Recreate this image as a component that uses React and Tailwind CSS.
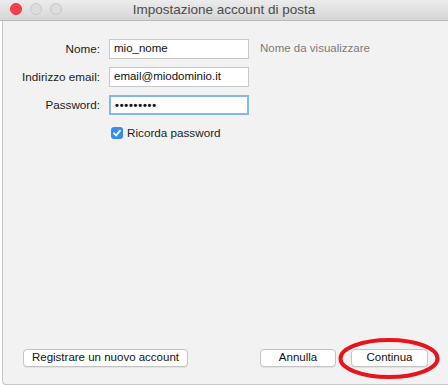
import React from "react";

const font = { fontFamily: '"Liberation Sans", Arial, sans-serif' };

function Field({ label, value, hint, focused }) {
  return (
    <div className="flex h-5 items-center">
      <div className="w-[97px] shrink-0 text-right text-[11.7px] text-[#1c1c1c]">{label}</div>
      <div
        className={`ml-[9px] flex h-5 w-[140px] shrink-0 items-center bg-white pl-[4px] text-[11.5px] text-[#111] ${
          focused
            ? "border-2 border-[#86b6ef] pl-[3px]"
            : "border border-[#c9c9c9]"
        }`}
      >
        {value}
      </div>
      {hint && <div className="ml-[11px] text-[11.5px] text-[#7b7b7b]">{hint}</div>}
    </div>
  );
}

function Button({ children, className = "" }) {
  return (
    <div
      className={`flex h-[18px] items-center justify-center rounded-[4px] border border-[#c4c4c4] bg-white text-[11.5px] text-[#111] shadow-[0_1px_0_rgba(0,0,0,0.06)] ${className}`}
    >
      {children}
    </div>
  );
}

export default function App() {
  return (
    <div className="flex h-[385px] w-[448px] flex-col bg-white" style={font}>
      {/* title bar */}
      <div className="relative flex h-[21px] shrink-0 items-center justify-center border-b border-[#b9b9b9] bg-gradient-to-b from-[#ececec] to-[#d6d6d6]">
        <div className="absolute left-[10px] top-[3px] flex gap-[8px]">
          <span className="h-3 w-3 rounded-full border border-[#e2333f] bg-[#fc3f4d]" />
          <span className="h-3 w-3 rounded-full border border-[#c8c8c8] bg-[#dddddd]" />
          <span className="h-3 w-3 rounded-full border border-[#c8c8c8] bg-[#dddddd]" />
        </div>
        <span className="text-[13.5px] text-[#4b4b4b]">Impostazione account di posta</span>
      </div>

      {/* body */}
      <div className="ml-[2px] flex flex-1 flex-col rounded-bl-[4px] border-b border-l border-[#c6c6c6] bg-[#f2f2f2] pt-[18px]">
        <div className="flex flex-col gap-2">
          <Field label="Nome:" value="mio_nome" hint="Nome da visualizzare" />
          <Field label="Indirizzo email:" value="email@miodominio.it" />
          <Field
            label="Password:"
            value={<span className="text-[11px] font-bold tracking-[0.8px]">•••••••••</span>}
            focused
          />
        </div>
        <div className="ml-[108px] mt-[9px] flex items-center">
          <span className="flex h-3 w-3 items-center justify-center rounded-[3px] bg-[#3b8af3]">
            <svg viewBox="0 0 12 12" className="h-3 w-3">
              <path d="M3 6.3 L5.1 8.5 L9 3.6" fill="none" stroke="white" strokeWidth="1.8" strokeLinecap="round" strokeLinejoin="round" />
            </svg>
          </span>
          <span className="ml-[4px] text-[11.7px] text-[#1c1c1c]">Ricorda password</span>
        </div>

        <div className="flex-1" />

        <div className="flex items-center pb-[17px] pl-[20px] pr-[20px]">
          <Button className="w-[165px]">Registrare un nuovo account</Button>
          <div className="flex-1" />
          <Button className="w-[76px]">Annulla</Button>
          <div className="relative ml-[15px]">
            <Button className="w-[77px]">Continua</Button>
            <svg
              className="pointer-events-none absolute left-[-13px] top-[-11px]"
              width="102"
              height="41"
              viewBox="0 0 102 41"
            >
              <ellipse cx="51" cy="20.5" rx="48.5" ry="18.5" fill="none" stroke="#e8141c" strokeWidth="4" />
            </svg>
          </div>
        </div>
      </div>
    </div>
  );
}
